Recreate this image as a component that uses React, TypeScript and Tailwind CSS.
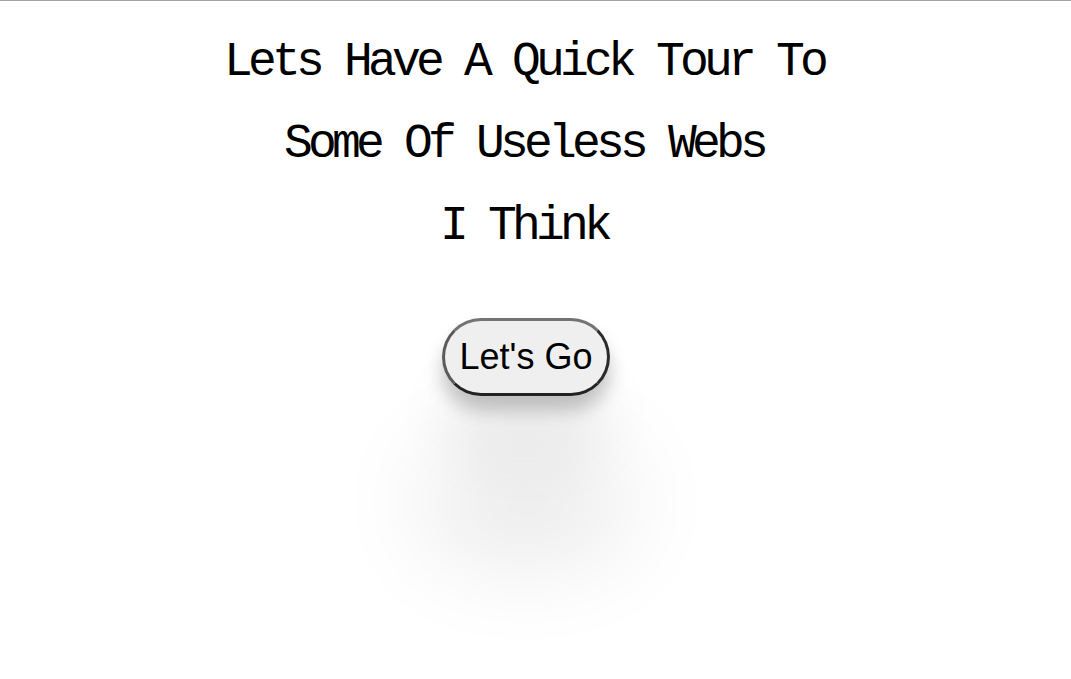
// Landing screen: three centred mono lines and a pill "Let's Go" button
// with a long soft shadow under it.

const LINES = ['Lets Have A Quick Tour To', 'Some Of Useless Webs', 'I Think'];

export default function App() {
  return (
    <div className="min-h-[679px] w-full border-t border-[#a3a3a3] bg-white pr-[19px]">
      <div className="flex flex-col items-center pt-[20px]">
        {LINES.map((line) => (
          <div
            key={line}
            className="whitespace-pre pr-[4px] text-[48px] leading-[82px] tracking-[-4.8px] text-black"
            style={{ fontFamily: '"Liberation Mono", "DejaVu Sans Mono", monospace' }}
          >
            {line}
          </div>
        ))}
        <button
          className="mt-[51px] rounded-full border-[3px] border-t-[#737373] border-l-[#5a5a5a] border-r-[#2a2a2a] border-b-[#222] bg-[#efefef] px-[15px] py-[15px] text-[36px] leading-[42px] text-black shadow-[0_14px_18px_rgba(0,0,0,0.22),0_60px_60px_rgba(0,0,0,0.06),0_145px_100px_18px_rgba(0,0,0,0.09)]"
          style={{ fontFamily: '"Liberation Sans", Arial, sans-serif' }}
        >
          Let's Go
        </button>
      </div>
    </div>
  );
}
